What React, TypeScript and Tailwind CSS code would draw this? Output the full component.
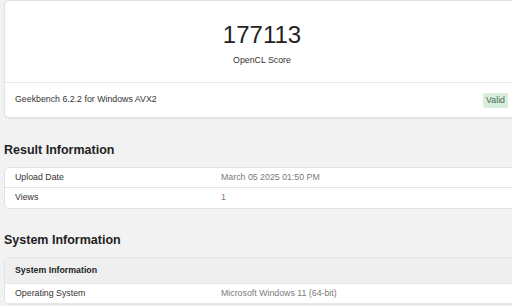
const font = { fontFamily: '"Liberation Sans", Arial, sans-serif' };

function InfoRow({ label, value, last }: { label: string; value: string; last?: boolean }) {
    return (
        <div className={`flex h-[20px] items-center ${last ? '' : 'border-b border-[#e6e6e6]'}`}>
            <div className="w-[206px] shrink-0 pl-[10px] text-[8.8px] text-[#333]">{label}</div>
            <div className="pl-[10px] text-[8.8px] text-[#7a7a7a]">{value}</div>
        </div>
    );
}

export default function App() {
    return (
        <div className="h-[306px] w-[512px] overflow-hidden bg-[#f2f2f2]" style={font}>
            <div className="w-[516px] pl-[4px]">
                <div className="w-[516px] rounded-[5px] border border-[#e2e2e2] bg-white shadow-[0_1px_2px_rgba(0,0,0,0.06)]">
                    <div className="flex h-[82px] flex-col items-center border-b border-[#e8e8e8]">
                        <div className="mt-[20px] text-[24px] font-light leading-[28px] text-[#222]">177113</div>
                        <div className="mt-[5px] text-[8.8px] text-[#333]">OpenCL Score</div>
                    </div>
                    <div className="flex h-[34px] items-center justify-between pl-[10px] pr-[10px]">
                        <span className="text-[8.8px] text-[#333]">Geekbench 6.2.2 for Windows AVX2</span>
                        <span className="mr-[1px] rounded-[2px] bg-[#d6eedb] px-[3px] py-[3px] text-[8.8px] leading-[9px] text-[#4a6a50]">Valid</span>
                    </div>
                </div>

                <h2 className="mt-[25px] text-[12.5px] font-bold leading-[15px] text-[#222]">Result Information</h2>
                <div className="mt-[9px] w-[516px] rounded-[5px] border border-[#e2e2e2] bg-white">
                    <InfoRow label="Upload Date" value="March 05 2025 01:50 PM" />
                    <InfoRow label="Views" value="1" last />
                </div>

                <h2 className="mt-[24px] text-[12.5px] font-bold leading-[15px] text-[#222]">System Information</h2>
                <div className="mt-[9px] w-[516px] overflow-hidden rounded-[5px] border border-[#e2e2e2] bg-white">
                    <div className="flex h-[26px] items-center border-b border-[#e6e6e6] bg-[#efefef] pl-[10px] text-[8.8px] font-bold text-[#222]">
                        System Information
                    </div>
                    <InfoRow label="Operating System" value="Microsoft Windows 11 (64-bit)" />
                </div>
            </div>
        </div>
    );
}
